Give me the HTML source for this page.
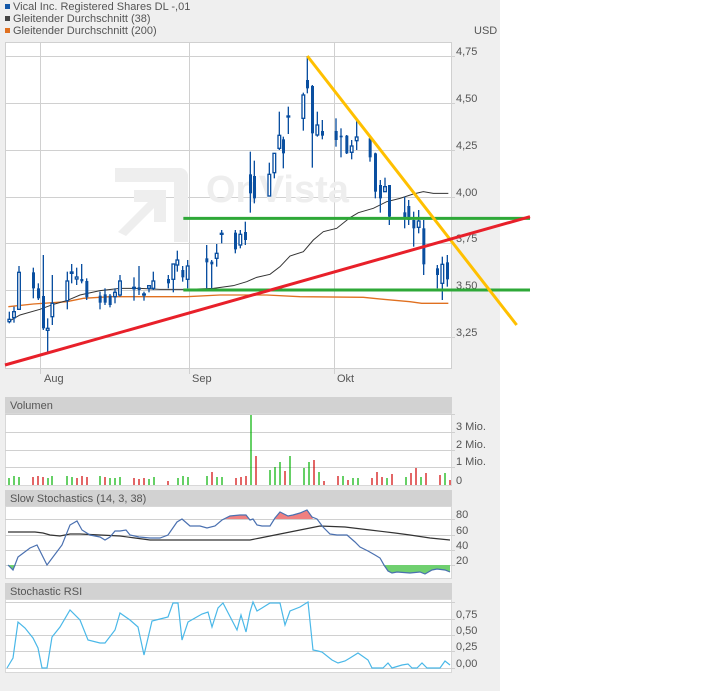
<!DOCTYPE html>
<html><head><meta charset="utf-8"><style>
html,body{margin:0;padding:0;background:#fff;width:728px;height:691px;overflow:hidden}
svg{display:block}
text{font-family:"Liberation Sans",sans-serif;font-size:11px;fill:#555}
</style></head><body>
<svg width="728" height="691" viewBox="0 0 728 691">
<rect x="0" y="0" width="500" height="691" fill="#efefef"/>
<rect x="5" y="4" width="5" height="5" fill="#1458a8"/><text x="13" y="10">Vical Inc. Registered Shares DL -,01</text>
<rect x="5" y="16" width="5" height="5" fill="#444"/><text x="13" y="22">Gleitender Durchschnitt (38)</text>
<rect x="5" y="28" width="5" height="5" fill="#e07020"/><text x="13" y="34">Gleitender Durchschnitt (200)</text>
<text x="474" y="34">USD</text>
<rect x="5.5" y="42.5" width="446" height="326" fill="#fff" stroke="#d0d0d0"/>
<g stroke="#d0d0d0" stroke-width="1">
<line x1="5" y1="56.5" x2="455" y2="56.5"/><line x1="5" y1="103.5" x2="455" y2="103.5"/><line x1="5" y1="150.5" x2="455" y2="150.5"/><line x1="5" y1="197.5" x2="455" y2="197.5"/><line x1="5" y1="243.5" x2="455" y2="243.5"/><line x1="5" y1="290.5" x2="455" y2="290.5"/><line x1="5" y1="337.5" x2="455" y2="337.5"/>
<line x1="40.5" y1="42" x2="40.5" y2="374"/><line x1="189.5" y1="42" x2="189.5" y2="374"/><line x1="334.5" y1="42" x2="334.5" y2="374"/>
</g>
<g fill="#eeeeee">
<path d="M115 168 h65 a8 8 0 0 1 8 8 v66 h-14 v-60 h-59 z"/>
<path d="M118 232 l30 -30 h-14 v-12 h32 v32 h-12 v-14 l-28 28 z"/>
</g>
<text x="206" y="202" style="font-size:38px;font-weight:bold;fill:#eeeeee">OnVista</text>
<text x="456" y="55">4,75</text><text x="456" y="102">4,50</text><text x="456" y="149">4,25</text><text x="456" y="196">4,00</text><text x="456" y="242">3,75</text><text x="456" y="289">3,50</text><text x="456" y="336">3,25</text>
<text x="44" y="382">Aug</text><text x="192" y="382">Sep</text><text x="337" y="382">Okt</text>
<g transform="translate(0,40) scale(0.333333)">
<polyline fill="none" stroke="#e07020" stroke-width="4" points="25,800 100,792 200,785 250,775 330,770 560,770 660,765 800,765 900,770 1090,772 1150,778 1230,785 1265,790 1345,790"/>
<polyline fill="none" stroke="#333" stroke-width="3" points="25,845 60,825 120,808 160,793 200,782 240,765 300,752 360,745 420,745 480,748 560,748 640,745 700,737 740,725 770,712 810,703 840,680 870,648 910,635 940,600 970,575 1010,565 1050,533 1075,518 1120,505 1160,485 1200,475 1240,462 1270,455 1300,460 1345,460"/>
<g stroke="#0a4fa0" stroke-width="4">
<line x1="28" y1="815" x2="28" y2="850"/><line x1="42" y1="800" x2="42" y2="848"/><line x1="57" y1="678" x2="57" y2="808"/><line x1="100" y1="683" x2="100" y2="775"/><line x1="115" y1="730" x2="115" y2="780"/><line x1="130" y1="645" x2="130" y2="870"/><line x1="143" y1="835" x2="143" y2="935"/><line x1="157" y1="705" x2="157" y2="855"/><line x1="202" y1="695" x2="202" y2="808"/><line x1="215" y1="672" x2="215" y2="730"/><line x1="230" y1="683" x2="230" y2="735"/><line x1="245" y1="672" x2="245" y2="730"/><line x1="260" y1="715" x2="260" y2="780"/><line x1="300" y1="755" x2="300" y2="808"/><line x1="315" y1="745" x2="315" y2="795"/><line x1="330" y1="762" x2="330" y2="802"/><line x1="345" y1="745" x2="345" y2="790"/><line x1="360" y1="705" x2="360" y2="770"/><line x1="402" y1="712" x2="402" y2="782"/><line x1="417" y1="678" x2="417" y2="765"/><line x1="432" y1="755" x2="432" y2="782"/><line x1="447" y1="735" x2="447" y2="757"/><line x1="460" y1="695" x2="460" y2="750"/><line x1="505" y1="705" x2="505" y2="745"/><line x1="520" y1="672" x2="520" y2="757"/><line x1="532" y1="632" x2="532" y2="695"/><line x1="548" y1="678" x2="548" y2="725"/><line x1="563" y1="660" x2="563" y2="745"/><line x1="620" y1="615" x2="620" y2="745"/><line x1="635" y1="660" x2="635" y2="745"/><line x1="650" y1="612" x2="650" y2="680"/><line x1="665" y1="570" x2="665" y2="610"/><line x1="706" y1="570" x2="706" y2="640"/><line x1="721" y1="570" x2="721" y2="625"/><line x1="736" y1="545" x2="736" y2="615"/><line x1="751" y1="335" x2="751" y2="518"/><line x1="763" y1="362" x2="763" y2="490"/><line x1="808" y1="368" x2="808" y2="468"/><line x1="823" y1="340" x2="823" y2="415"/><line x1="838" y1="215" x2="838" y2="330"/><line x1="850" y1="290" x2="850" y2="385"/><line x1="865" y1="200" x2="865" y2="282"/><line x1="910" y1="158" x2="910" y2="272"/><line x1="922" y1="48" x2="922" y2="160"/><line x1="937" y1="135" x2="937" y2="383"/><line x1="952" y1="215" x2="952" y2="290"/><line x1="967" y1="240" x2="967" y2="298"/><line x1="1008" y1="235" x2="1008" y2="320"/><line x1="1023" y1="265" x2="1023" y2="352"/><line x1="1040" y1="285" x2="1040" y2="342"/><line x1="1055" y1="300" x2="1055" y2="358"/><line x1="1070" y1="243" x2="1070" y2="330"/><line x1="1110" y1="290" x2="1110" y2="365"/><line x1="1126" y1="338" x2="1126" y2="475"/><line x1="1141" y1="420" x2="1141" y2="518"/><line x1="1155" y1="413" x2="1155" y2="455"/><line x1="1168" y1="435" x2="1168" y2="555"/><line x1="1214" y1="470" x2="1214" y2="565"/><line x1="1226" y1="480" x2="1226" y2="555"/><line x1="1241" y1="515" x2="1241" y2="620"/><line x1="1256" y1="510" x2="1256" y2="580"/><line x1="1271" y1="540" x2="1271" y2="705"/><line x1="1312" y1="675" x2="1312" y2="745"/><line x1="1327" y1="650" x2="1327" y2="780"/><line x1="1342" y1="645" x2="1342" y2="740"/>
</g>
<g fill="#0a4fa0">
<rect x="96" y="697" width="9" height="48"/><rect x="111" y="745" width="9" height="30"/><rect x="126" y="768" width="9" height="97"/><rect x="241" y="717" width="9" height="7"/><rect x="256" y="723" width="9" height="49"/><rect x="296" y="767" width="9" height="21"/><rect x="311" y="763" width="9" height="25"/><rect x="326" y="767" width="9" height="28"/><rect x="413" y="742" width="9" height="8"/><rect x="501" y="717" width="9" height="13"/><rect x="544" y="690" width="9" height="22"/><rect x="616" y="655" width="9" height="12"/><rect x="631" y="665" width="9" height="8"/><rect x="702" y="578" width="9" height="50"/><rect x="732" y="576" width="9" height="24"/><rect x="747" y="403" width="9" height="57"/><rect x="759" y="408" width="9" height="67"/><rect x="846" y="298" width="9" height="42"/><rect x="918" y="120" width="9" height="25"/><rect x="933" y="138" width="9" height="142"/><rect x="963" y="273" width="9" height="14"/><rect x="1004" y="273" width="9" height="27"/><rect x="1019" y="287" width="9" height="5"/><rect x="1036" y="287" width="9" height="53"/><rect x="1106" y="295" width="9" height="57"/><rect x="1122" y="340" width="9" height="115"/><rect x="1137" y="435" width="9" height="40"/><rect x="1164" y="435" width="9" height="95"/><rect x="1210" y="517" width="9" height="18"/><rect x="1222" y="498" width="9" height="42"/><rect x="1237" y="540" width="9" height="25"/><rect x="1267" y="565" width="9" height="108"/><rect x="1308" y="685" width="9" height="20"/><rect x="1338" y="667" width="9" height="51"/>
</g>
<g fill="#fff" stroke="#0a4fa0" stroke-width="4">
<rect x="24" y="838" width="8" height="7"/><rect x="38" y="815" width="8" height="18"/><rect x="53" y="697" width="8" height="111"/><rect x="139" y="865" width="8" height="6"/><rect x="153" y="790" width="8" height="40"/><rect x="198" y="723" width="8" height="59"/><rect x="211" y="696" width="8" height="4"/><rect x="226" y="711" width="8" height="6"/><rect x="341" y="757" width="8" height="13"/><rect x="356" y="723" width="8" height="42"/><rect x="398" y="742" width="8" height="4"/><rect x="428" y="762" width="8" height="3"/><rect x="443" y="737" width="8" height="8"/><rect x="456" y="723" width="8" height="22"/><rect x="516" y="672" width="8" height="46"/><rect x="528" y="660" width="8" height="15"/><rect x="559" y="678" width="8" height="40"/><rect x="646" y="640" width="8" height="15"/><rect x="661" y="580" width="8" height="3"/><rect x="717" y="583" width="8" height="32"/><rect x="804" y="403" width="8" height="65"/><rect x="819" y="340" width="8" height="58"/><rect x="834" y="286" width="8" height="39"/><rect x="861" y="228" width="8" height="3"/><rect x="906" y="165" width="8" height="70"/><rect x="948" y="255" width="8" height="30"/><rect x="1051" y="318" width="8" height="19"/><rect x="1066" y="291" width="8" height="11"/><rect x="1151" y="440" width="8" height="15"/><rect x="1252" y="543" width="8" height="19"/><rect x="1323" y="673" width="8" height="57"/>
</g>
<line x1="550" y1="535" x2="1590" y2="535" stroke="#2ea838" stroke-width="9"/>
<line x1="550" y1="750" x2="1590" y2="750" stroke="#2ea838" stroke-width="9"/>
<line x1="922" y1="48" x2="1550" y2="855" stroke="#ffc000" stroke-width="9"/>
<line x1="15" y1="975" x2="1590" y2="530" stroke="#e8202a" stroke-width="9"/>
</g>
<rect x="5" y="397" width="447" height="16" fill="#d2d2d2"/><text x="10" y="409">Volumen</text>
<rect x="5.5" y="413.5" width="446" height="72" fill="#fff" stroke="#d8d8d8"/>
<g stroke="#d0d0d0"><line x1="5" y1="414.5" x2="455" y2="414.5"/><line x1="5" y1="432.5" x2="455" y2="432.5"/><line x1="5" y1="450.5" x2="455" y2="450.5"/><line x1="5" y1="467.5" x2="455" y2="467.5"/></g>
<text x="456" y="430">3 Mio.</text><text x="456" y="448">2 Mio.</text><text x="456" y="465">1 Mio.</text><text x="456" y="484">0</text>
<g stroke-width="1.2">
<g stroke="#00b000"><line x1="9" y1="485" x2="9" y2="478"/><line x1="14" y1="485" x2="14" y2="476"/><line x1="19" y1="485" x2="19" y2="477"/><line x1="48" y1="485" x2="48" y2="478"/><line x1="52" y1="485" x2="52" y2="476"/><line x1="67" y1="485" x2="67" y2="476"/><line x1="72" y1="485" x2="72" y2="477"/><line x1="100" y1="485" x2="100" y2="476"/><line x1="110" y1="485" x2="110" y2="478"/><line x1="115" y1="485" x2="115" y2="478"/><line x1="120" y1="485" x2="120" y2="477"/><line x1="149" y1="485" x2="149" y2="479"/><line x1="154" y1="485" x2="154" y2="477"/><line x1="178" y1="485" x2="178" y2="478"/><line x1="183" y1="485" x2="183" y2="476"/><line x1="188" y1="485" x2="188" y2="477"/><line x1="207" y1="485" x2="207" y2="476"/><line x1="217" y1="485" x2="217" y2="477"/><line x1="222" y1="485" x2="222" y2="477"/><line x1="251" y1="485" x2="251" y2="415"/><line x1="270" y1="485" x2="270" y2="470"/><line x1="275" y1="485" x2="275" y2="467"/><line x1="280" y1="485" x2="280" y2="462"/><line x1="290" y1="485" x2="290" y2="456"/><line x1="304" y1="485" x2="304" y2="468"/><line x1="309" y1="485" x2="309" y2="462"/><line x1="319" y1="485" x2="319" y2="472"/><line x1="343" y1="485" x2="343" y2="476"/><line x1="353" y1="485" x2="353" y2="478"/><line x1="358" y1="485" x2="358" y2="478"/><line x1="387" y1="485" x2="387" y2="478"/><line x1="406" y1="485" x2="406" y2="477"/><line x1="421" y1="485" x2="421" y2="477"/><line x1="445" y1="485" x2="445" y2="473"/></g>
<g stroke="#d00000"><line x1="33" y1="485" x2="33" y2="477"/><line x1="38" y1="485" x2="38" y2="476"/><line x1="43" y1="485" x2="43" y2="477"/><line x1="77" y1="485" x2="77" y2="478"/><line x1="82" y1="485" x2="82" y2="476"/><line x1="87" y1="485" x2="87" y2="477"/><line x1="105" y1="485" x2="105" y2="477"/><line x1="134" y1="485" x2="134" y2="478"/><line x1="139" y1="485" x2="139" y2="479"/><line x1="144" y1="485" x2="144" y2="478"/><line x1="168" y1="485" x2="168" y2="481"/><line x1="212" y1="485" x2="212" y2="472"/><line x1="236" y1="485" x2="236" y2="478"/><line x1="241" y1="485" x2="241" y2="477"/><line x1="246" y1="485" x2="246" y2="476"/><line x1="256" y1="485" x2="256" y2="456"/><line x1="285" y1="485" x2="285" y2="471"/><line x1="314" y1="485" x2="314" y2="460"/><line x1="324" y1="485" x2="324" y2="481"/><line x1="338" y1="485" x2="338" y2="476"/><line x1="348" y1="485" x2="348" y2="480"/><line x1="372" y1="485" x2="372" y2="478"/><line x1="377" y1="485" x2="377" y2="472"/><line x1="382" y1="485" x2="382" y2="477"/><line x1="392" y1="485" x2="392" y2="474"/><line x1="411" y1="485" x2="411" y2="473"/><line x1="416" y1="485" x2="416" y2="468"/><line x1="426" y1="485" x2="426" y2="473"/><line x1="440" y1="485" x2="440" y2="475"/><line x1="450" y1="485" x2="450" y2="480"/></g>
</g>
<rect x="5" y="490" width="447" height="16" fill="#d2d2d2"/><text x="10" y="502">Slow Stochastics (14, 3, 38)</text>
<rect x="5.5" y="506.5" width="446" height="72" fill="#fff" stroke="#d8d8d8"/>
<g stroke="#d0d0d0"><line x1="5" y1="519.5" x2="455" y2="519.5"/><line x1="5" y1="535.5" x2="455" y2="535.5"/><line x1="5" y1="550.5" x2="455" y2="550.5"/><line x1="5" y1="565.5" x2="455" y2="565.5"/></g>
<text x="456" y="518">80</text><text x="456" y="534">60</text><text x="456" y="549">40</text><text x="456" y="564">20</text>
<polygon fill="#f08080" points="225,519 230,516 240,515 246,515 249,519"/>
<polygon fill="#f08080" points="275,519 280,512 288,516 293,515 300,513 307,510 312,517 313,519"/>
<polygon fill="#70d070" points="383,565 388,571 392,573 397,572 410,573 420,572 425,574 432,570 437,569 445,570 450,572 450,565"/>
<polygon fill="#70d070" points="8,565 13,570 16,565"/>
<polyline fill="none" stroke="#333" stroke-width="1.2" points="8,532 35,532 43,533 50,535 60,536 70,534 80,534 100,535 120,536 135,538 150,540 170,540 200,540 230,540 250,540 260,538 280,534 300,530 320,526 345,527 370,530 395,533 410,535 430,538 450,540"/>
<polyline fill="none" stroke="#4a70b0" stroke-width="1.2" points="8,565 13,570 18,557 30,548 37,545 42,555 47,565 62,545 70,525 77,521 82,530 90,535 100,537 105,540 110,537 115,531 120,531 126,530 130,535 139,537 150,538 160,538 168,535 177,522 182,519 190,526 200,526 207,528 215,526 222,520 230,516 240,515 246,515 250,520 253,519 257,525 262,526 270,526 275,518 280,512 288,516 293,515 300,513 307,510 312,517 317,519 323,527 330,534 337,535 347,535 355,542 360,547 368,551 375,555 380,558 384,565 388,571 392,573 397,572 410,573 420,572 425,574 432,570 437,569 445,570 450,572"/>
<rect x="5" y="583" width="447" height="16" fill="#d2d2d2"/><text x="10" y="595">Stochastic RSI</text>
<rect x="5.5" y="599.5" width="446" height="73" fill="#fff" stroke="#d8d8d8"/>
<g stroke="#d0d0d0"><line x1="5" y1="602.5" x2="455" y2="602.5"/><line x1="5" y1="619.5" x2="455" y2="619.5"/><line x1="5" y1="635.5" x2="455" y2="635.5"/><line x1="5" y1="651.5" x2="455" y2="651.5"/><line x1="5" y1="668.5" x2="455" y2="668.5"/></g>
<text x="456" y="618">0,75</text><text x="456" y="634">0,50</text><text x="456" y="650">0,25</text><text x="456" y="667">0,00</text>
<polyline fill="none" stroke="#4ab8e8" stroke-width="1.2" points="7,668 13,658 18,622 25,628 33,638 38,648 42,668 47,668 52,637 60,627 70,610 80,620 88,640 100,643 105,643 115,630 120,613 130,620 138,627 144,655 152,621 160,619 168,617 173,603 178,603 182,640 188,622 195,618 202,614 208,612 212,627 218,608 223,603 237,630 241,615 246,632 250,612 253,602 257,611 262,608 270,603 280,603 285,625 290,611 300,607 308,602 313,650 318,651 322,652 332,660 338,663 345,661 350,658 358,653 368,660 372,668 383,668 388,663 392,668 402,665 408,664 412,668 417,668 422,663 427,668 440,668 445,661 450,665"/>
</svg>
</body></html>
